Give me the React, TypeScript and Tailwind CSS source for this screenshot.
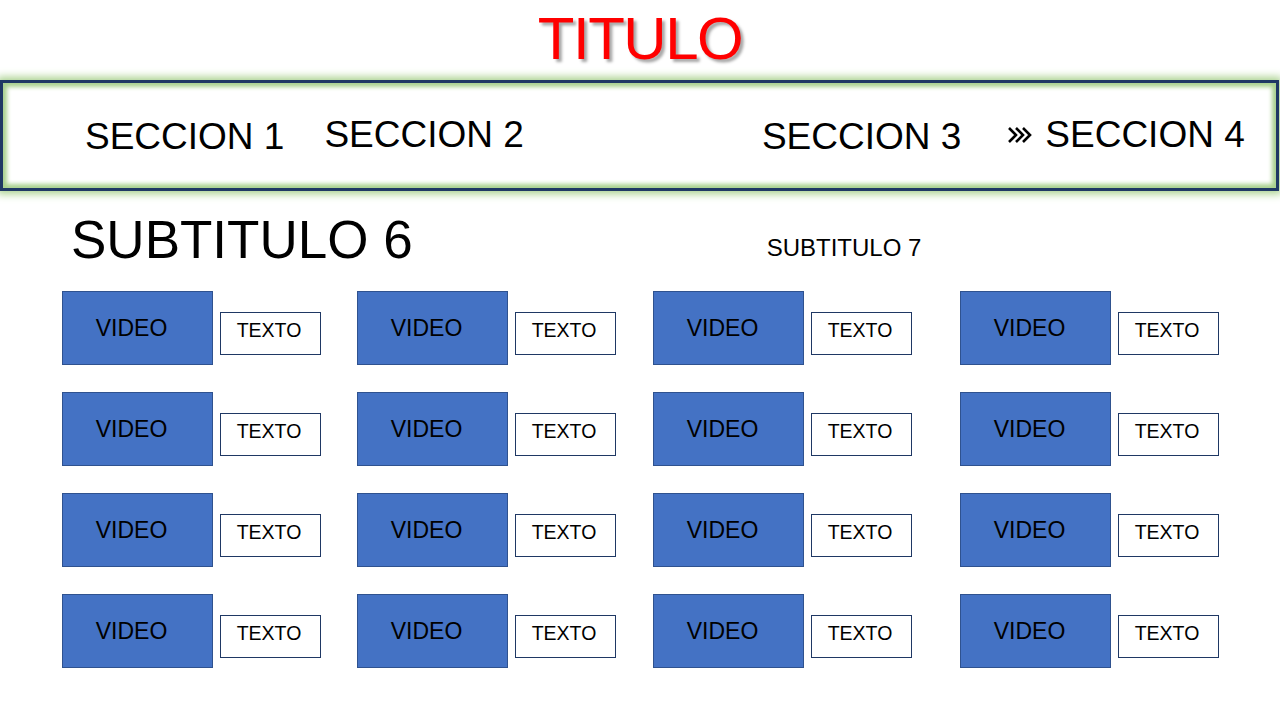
import React from 'react';

const sections = [
  { label: 'SECCION 1', cls: 'ml-[82px]' },
  { label: 'SECCION 2', cls: 'ml-[40px] -mt-[2px]' },
  { label: 'SECCION 3', cls: 'ml-[238px]' },
];

function Chevrons() {
  return (
    <svg width="25" height="18" viewBox="0 0 25 18" className="mt-[8px]">
      <g fill="none" stroke="#000" strokeWidth="2.6" strokeLinejoin="miter">
        <polyline points="2,2 9,9 2,16" />
        <polyline points="9,2 16,9 9,16" />
        <polyline points="16,2 23,9 16,16" />
      </g>
    </svg>
  );
}

function Item() {
  return (
    <div className="flex items-start">
      <div className="w-[151px] h-[74px] bg-[#4472c4] border border-[#2f528f] flex items-center justify-center pr-[12px]">
        <span className="text-[23px] leading-none text-black">VIDEO</span>
      </div>
      <div className="ml-[7px] mt-[21px] w-[101px] h-[43px] bg-white border border-[#1f3864] flex items-center justify-center pb-[5px] pr-[3px]">
        <span className="text-[19.5px] leading-none text-black">TEXTO</span>
      </div>
    </div>
  );
}

export default function App() {
  return (
    <div className="w-[1280px] h-[720px] bg-white overflow-hidden font-['Liberation_Sans',Arial,sans-serif]">
      <div className="pt-[9px] h-[69px] flex justify-center">
        <h1 className="text-[60px] leading-none tracking-[-1.5px] text-[#ff0000] [text-shadow:3px_3px_3px_rgba(0,0,0,0.35)]">
          TITULO
        </h1>
      </div>
      <nav className="mt-[11px] mr-[1px] h-[111px] border-[3px] border-[#1f3864] bg-white shadow-[0_0_8px_3px_#a9d18e,inset_0_0_4px_4px_#a9d18e] flex items-start pt-[35px]">
        {sections.map((s) => (
          <span key={s.label} className={`text-[37px] leading-none text-black ${s.cls}`}>
            {s.label}
          </span>
        ))}
        <div className="ml-[46px] flex items-start">
          <Chevrons />
          <span className="ml-[13px] -mt-[2px] text-[37px] leading-none text-black">SECCION 4</span>
        </div>
      </nav>
      <div className="mt-[22px] flex items-start pl-[71px]">
        <h2 className="text-[53px] leading-none text-black">SUBTITULO 6</h2>
        <h3 className="ml-[354px] mt-[23px] text-[24px] leading-none text-black">SUBTITULO 7</h3>
      </div>
      <div className="mt-[25px] pl-[62px] grid grid-cols-[295px_296px_307px_300px] gap-y-[27px]">
        {Array.from({ length: 16 }).map((_, i) => (
          <Item key={i} />
        ))}
      </div>
    </div>
  );
}
